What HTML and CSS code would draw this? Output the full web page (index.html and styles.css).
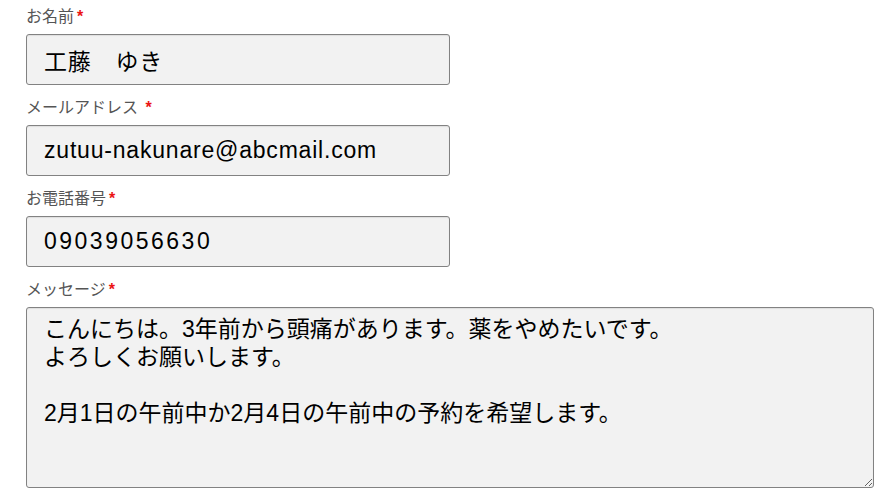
FILE: index.html
```html
<!DOCTYPE html>
<html>
  <head>
    <meta charset="UTF-8">
    <title>お問い合わせ</title>
    <link rel="stylesheet" href="styles.css">
  </head>
  <body>
    <form class="contact-form">
      <div class="form-group">
        <label>お名前<span class="required">*</span></label>
        <input type="text" name="name" value="工藤　ゆき">
      </div>
      <div class="form-group">
        <label>メールアドレス <span class="required">*</span></label>
        <input type="email" name="email" value="zutuu-nakunare@abcmail.com">
      </div>
      <div class="form-group">
        <label>お電話番号<span class="required">*</span></label>
        <input type="tel" name="tel" value="09039056630">
      </div>
      <div class="form-group">
        <label>メッセージ<span class="required">*</span></label>
        <textarea name="message">こんにちは。3年前から頭痛があります。薬をやめたいです。
よろしくお願いします。

2月1日の午前中か2月4日の午前中の予約を希望します。</textarea>
      </div>
    </form>
  </body>
</html>
```

FILE: styles.css
```css
* {
  box-sizing: border-box;
}
body {
  margin: 0;
  padding: 7px 0 0 26px;
  font-family: "Liberation Sans", "Noto Sans CJK JP", sans-serif;
  background-color: white;
}
label {
  display: block;
  height: 20px;
  line-height: 20px;
  margin-bottom: 7px;
  font-size: 16px;
  color: rgb(85, 85, 85);
}
.required {
  color: rgb(235, 20, 20);
  font-weight: bold;
  margin-left: 3px;
}
input,
textarea {
  display: block;
  font-family: "Liberation Sans", "Noto Sans CJK JP", sans-serif;
  color: black;
  background-color: rgb(242, 242, 242);
  border: 1px solid rgb(130, 130, 130);
  border-radius: 3px;
  box-shadow: inset 0 1px 1px rgba(0, 0, 0, 0.08);
  outline: none;
}
input {
  width: 424px;
  height: 51px;
  padding: 0 17px;
  font-size: 23px;
  letter-spacing: 0.8px;
}
input[type="tel"] {
  letter-spacing: 2.5px;
}
textarea {
  width: 848px;
  height: 181px;
  padding: 7px 17px;
  font-size: 23px;
  line-height: 28px;
  resize: both;
}
.form-group {
  margin-bottom: 13px;
}
```
